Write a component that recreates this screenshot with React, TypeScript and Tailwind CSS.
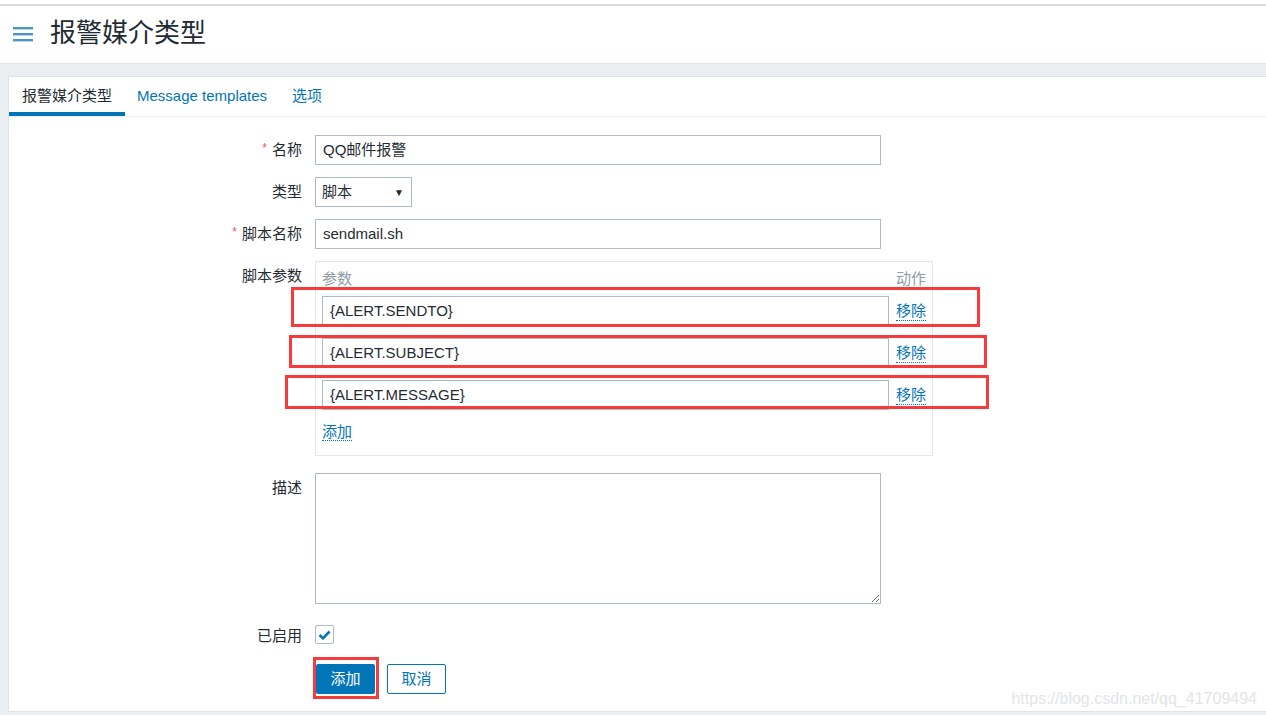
import React from "react";

const font = { fontFamily: '"Liberation Sans", "Noto Sans CJK SC", Arial, sans-serif' };

function Label({ text, req }: { text: string; req?: boolean }) {
  return (
    <div className="w-[293px] shrink-0 text-right h-[30px] leading-[30px] text-[15px] text-[#1f2c33]">
      {req && <span className="text-[#e45959] text-[12px] mr-[5px] relative top-[-3px]">*</span>}
      {text}
    </div>
  );
}

function ParamRow({ value }: { value: string }) {
  return (
    <div className="flex items-center h-[30px]">
      <div className="w-[567px] h-[30px] border border-[#acbbc4] bg-white pl-[7px] leading-[28px] text-[15px] text-[#1f2c33]">
        {value}
      </div>
      <span className="ml-[7px] text-[15px] text-[#0275b8] leading-[18px] border-b border-dotted border-[#0275b8]">移除</span>
    </div>
  );
}

export default function App() {
  return (
    <div className="relative w-full h-[715px] bg-[#ebeef0] flex flex-col overflow-hidden" style={font}>
      {/* top strip */}
      <div className="h-[4px] bg-white shrink-0" />
      <div className="h-[2px] bg-[#dcdcdc] shrink-0" />
      {/* header */}
      <div className="h-[57px] bg-white shrink-0 flex items-center pl-[13px]">
        <svg width="20" height="16" viewBox="0 0 20 16" className="mt-[-2px]">
          <rect x="0" y="1" width="20" height="2.4" fill="#4796c4" />
          <rect x="0" y="7" width="20" height="2.4" fill="#4796c4" />
          <rect x="0" y="13" width="20" height="2.4" fill="#4796c4" />
        </svg>
        <div className="ml-[17px] text-[26px] text-[#1f2c33] leading-none mt-[-4px]">报警媒介类型</div>
      </div>
      <div className="h-[13px] shrink-0 border-t border-[#dfe4e7]" />
      {/* panel */}
      <div className="flex-1 ml-[8px] mb-[3px] bg-white border border-[#dfe4e7] border-r-0 flex flex-col">
        {/* tabs */}
        <div className="h-[40px] border-b border-[#ebeef0] flex text-[15px]">
          <div className="relative px-[13px] h-full leading-[38px] text-[#1f2c33]">
            报警媒介类型
            <div className="absolute left-0 right-0 bottom-0 h-[4px] bg-[#0275b8]" />
          </div>
          <div className="pl-[12px] pr-[13px] leading-[38px] text-[#0275b8]">Message templates</div>
          <div className="px-[12px] leading-[38px] text-[#0275b8]">选项</div>
        </div>
        {/* form */}
        <div className="pt-[18px] flex flex-col">
          <div className="flex">
            <Label text="名称" req />
            <div className="ml-[13px] w-[566px] h-[30px] border border-[#acbbc4] pl-[7px] leading-[28px] text-[15px] text-[#1f2c33]">QQ邮件报警</div>
          </div>
          <div className="flex mt-[12px]">
            <Label text="类型" />
            <div className="ml-[13px] w-[97px] h-[30px] border border-[#acbbc4] pl-[6px] pr-[7px] flex items-center justify-between text-[15px] text-[#1f2c33]">
              <span>脚本</span>
              <span className="text-[10px]">▼</span>
            </div>
          </div>
          <div className="flex mt-[12px]">
            <Label text="脚本名称" req />
            <div className="ml-[13px] w-[566px] h-[30px] border border-[#acbbc4] pl-[7px] leading-[28px] text-[15px] text-[#1f2c33]">sendmail.sh</div>
          </div>
          <div className="flex mt-[12px]">
            <Label text="脚本参数" />
            <div className="ml-[13px] w-[618px] h-[195px] border border-[#e4e8eb] pt-[5px] px-[6px] flex flex-col">
              <div className="flex justify-between h-[24px] leading-[24px] text-[15px] text-[#8d9ca5]">
                <span>参数</span>
                <span>动作</span>
              </div>
              <div className="mt-[5px] flex flex-col gap-[12px]">
                <ParamRow value="{ALERT.SENDTO}" />
                <ParamRow value="{ALERT.SUBJECT}" />
                <ParamRow value="{ALERT.MESSAGE}" />
              </div>
              <div className="mt-[10px]">
                <span className="text-[15px] text-[#0275b8] leading-[18px] border-b border-dotted border-[#0275b8]">添加</span>
              </div>
            </div>
          </div>
          <div className="flex mt-[17px]">
            <Label text="描述" />
            <textarea
              readOnly
              className="ml-[13px] w-[566px] h-[131px] border border-[#acbbc4] outline-none block"
            />
          </div>
          <div className="flex items-center h-[19px] mt-[21px]">
            <div className="w-[293px] text-right text-[15px] leading-[19px] text-[#1f2c33] mt-[2px]">已启用</div>
            <div className="ml-[13px] w-[19px] h-[19px] border border-[#acbbc4] rounded-[2px] flex items-center justify-center">
              <svg width="13" height="10" viewBox="0 0 13 10">
                <path d="M1.5 5 L5 8.3 L11.5 1.5" stroke="#0275b8" strokeWidth="2.6" fill="none" />
              </svg>
            </div>
          </div>
          <div className="flex mt-[20px] pl-[307px]">
            <div className="w-[59px] h-[30px] bg-[#0275b8] rounded-[2px] text-white text-[15px] flex items-center justify-center">添加</div>
            <div className="ml-[12px] w-[59px] h-[30px] border border-[#0275b8] rounded-[2px] text-[#0275b8] text-[15px] flex items-center justify-center">取消</div>
          </div>
        </div>
      </div>

      {/* red annotation boxes */}
      <div className="absolute left-[291px] top-[287px] w-[689px] h-[40px] border-[3px] border-[#f73b3b] pointer-events-none" />
      <div className="absolute left-[289px] top-[335px] w-[698px] h-[33px] border-[3px] border-[#f73b3b] pointer-events-none" />
      <div className="absolute left-[285px] top-[375px] w-[704px] h-[34px] border-[3px] border-[#f73b3b] pointer-events-none" />
      <div className="absolute left-[313px] top-[657px] w-[66px] h-[42px] border-[3px] border-[#f73b3b] pointer-events-none" />

      {/* watermark */}
      <div className="absolute right-[9px] top-[687px] text-[16px] text-[#e3e5e7] pointer-events-none">https://blog.csdn.net/qq_41709494</div>
    </div>
  );
}
